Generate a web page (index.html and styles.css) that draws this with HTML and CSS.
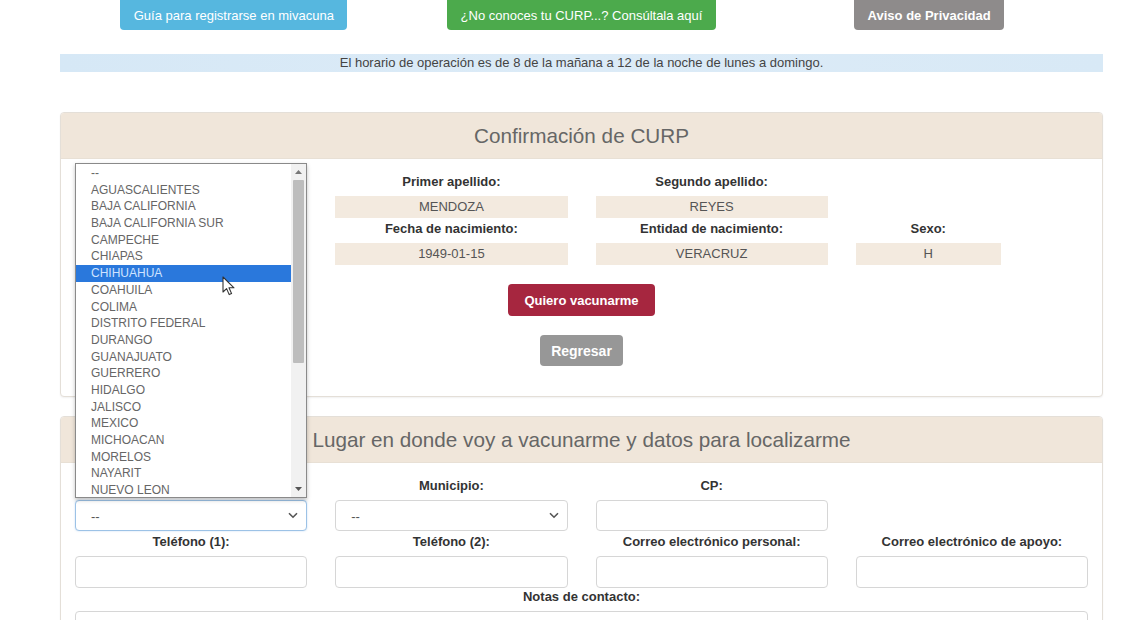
FILE: index.html
```html
<!DOCTYPE html>
<html lang="es">
<head>
<meta charset="utf-8">
<title>Mi vacuna</title>
<link rel="stylesheet" href="styles.css">
</head>
<body>
<div class="page">
  <div class="top-buttons">
    <div class="tb-cell"><a class="btn btn-info">Guía para registrarse en mivacuna</a></div>
    <div class="tb-cell"><a class="btn btn-success">¿No conoces tu CURP...? Consúltala aquí</a></div>
    <div class="tb-cell"><a class="btn btn-gray">Aviso de Privacidad</a></div>
  </div>

  <div class="info">El horario de operación es de 8 de la mañana a 12 de la noche de lunes a domingo.</div>

  <section class="card card-curp">
    <header class="card-head">Confirmación de CURP</header>
    <div class="card-body">
      <div class="grid4">
        <div class="field"></div>
        <div class="field"><div class="label">Primer apellido:</div><div class="value">MENDOZA</div></div>
        <div class="field"><div class="label">Segundo apellido:</div><div class="value">REYES</div></div>
        <div class="field"></div>
        <div class="field"></div>
        <div class="field"><div class="label">Fecha de nacimiento:</div><div class="value">1949-01-15</div></div>
        <div class="field"><div class="label">Entidad de nacimiento:</div><div class="value">VERACRUZ</div></div>
        <div class="field field-short"><div class="label">Sexo:</div><div class="value">H</div></div>
      </div>
      <div class="actions">
        <a class="btn btn-red">Quiero vacunarme</a>
        <a class="btn btn-back">Regresar</a>
      </div>
    </div>
  </section>

  <section class="card card-place">
    <header class="card-head">Lugar en donde voy a vacunarme y datos para localizarme</header>
    <div class="card-body body-place">
      <div class="grid4">
        <div class="field">
          <div class="label"></div>
          <div class="select-wrap">
            <div class="select focused"><span>--</span>
              <svg class="chev" width="10" height="7" viewBox="0 0 10 7"><path d="M1 1.2 L5 5.2 L9 1.2" fill="none" stroke="#555" stroke-width="1.6"/></svg>
            </div>
            <div class="listbox">
              <ul class="options">
                <li>--</li>
                <li>AGUASCALIENTES</li>
                <li>BAJA CALIFORNIA</li>
                <li>BAJA CALIFORNIA SUR</li>
                <li>CAMPECHE</li>
                <li>CHIAPAS</li>
                <li class="hl">CHIHUAHUA</li>
                <li>COAHUILA</li>
                <li>COLIMA</li>
                <li>DISTRITO FEDERAL</li>
                <li>DURANGO</li>
                <li>GUANAJUATO</li>
                <li>GUERRERO</li>
                <li>HIDALGO</li>
                <li>JALISCO</li>
                <li>MEXICO</li>
                <li>MICHOACAN</li>
                <li>MORELOS</li>
                <li>NAYARIT</li>
                <li>NUEVO LEON</li>
              </ul>
              <div class="sbar">
                <svg class="arr arr-up" width="7" height="4" viewBox="0 0 7 4"><path d="M0 4 L3.5 0 L7 4Z" fill="#777"/></svg>
                <div class="thumb"></div>
                <svg class="arr arr-down" width="7" height="4" viewBox="0 0 7 4"><path d="M0 0 L3.5 4 L7 0Z" fill="#555"/></svg>
              </div>
              <svg class="cursor" width="13" height="20" viewBox="0 0 13 20"><path d="M1 1 L1 16 L4.6 12.6 L7.2 18.6 L9.6 17.6 L7 11.8 L12 11.8 Z" fill="#fff" stroke="#333" stroke-width="1.1" stroke-linejoin="round"/></svg>
            </div>
          </div>
        </div>
        <div class="field">
          <div class="label">Municipio:</div>
          <div class="select"><span>--</span>
            <svg class="chev" width="10" height="7" viewBox="0 0 10 7"><path d="M1 1.2 L5 5.2 L9 1.2" fill="none" stroke="#555" stroke-width="1.6"/></svg>
          </div>
        </div>
        <div class="field"><div class="label">CP:</div><div class="input"></div></div>
        <div class="field"></div>
        <div class="field"><div class="label">Teléfono (1):</div><div class="input tall"></div></div>
        <div class="field"><div class="label">Teléfono (2):</div><div class="input tall"></div></div>
        <div class="field"><div class="label">Correo electrónico personal:</div><div class="input tall"></div></div>
        <div class="field"><div class="label">Correo electrónico de apoyo:</div><div class="input tall"></div></div>
      </div>
      <div class="notes">
        <div class="label label-notes">Notas de contacto:</div>
        <div class="textarea"></div>
      </div>
    </div>
  </section>
</div>
</body>
</html>
```

FILE: styles.css
```css
* { box-sizing: border-box; }
html, body { margin: 0; padding: 0; background: #fff; }
body {
  font-family: "Liberation Sans", Arial, sans-serif;
  color: #333;
  overflow: hidden;
}
.page { width: 1043px; margin-left: 60px; }

.top-buttons {
  display: grid;
  grid-template-columns: repeat(3, 1fr);
  margin-top: -6px;
}
.tb-cell { display: flex; justify-content: center; }
.btn {
  display: inline-flex;
  align-items: center;
  justify-content: center;
  color: #fff;
  border-radius: 4px;
  font-size: 13px;
  white-space: nowrap;
}
.top-buttons .btn { height: 36px; padding-top: 6px; }
.btn-info { background: #56b7df; width: 227px; }
.btn-success { background: #4caa4c; width: 269px; }
.btn-gray { background: #8e8b8b; width: 150px; font-weight: bold; }

.info {
  margin-top: 24px;
  height: 18px;
  line-height: 18px;
  background: linear-gradient(90deg, #d6e8f6, #dcebf7 50%, #d8e9f6);
  text-align: center;
  font-size: 13px;
  color: #444;
}

.card {
  border: 1px solid #e4dfd8;
  border-radius: 4px;
  box-shadow: 0 1px 2px rgba(0,0,0,0.06);
  background: #fff;
}
.card-curp { margin-top: 40px; }
.card-place { margin-top: 19px; }
.card-head {
  height: 46px;
  background: #f0e6da;
  border-bottom: 1px solid #e8e0d5;
  display: flex;
  align-items: center;
  justify-content: center;
  font-size: 20.7px;
  color: #666;
  border-radius: 3px 3px 0 0;
}
.card-body { padding: 12px 14px 30px; }
.body-place { padding-top: 12px; padding-bottom: 0; }

.grid4 {
  display: grid;
  grid-template-columns: repeat(4, 1fr);
  column-gap: 28px;
}
.field { display: flex; flex-direction: column; align-items: stretch; }
.field-short { width: 145px; }
.label {
  margin-top: 3px;
  margin-bottom: 6px;
  height: 16px;
  line-height: 16px;
  font-size: 13px;
  font-weight: bold;
  color: #333;
  text-align: center;
  white-space: nowrap;
}
.value {
  height: 22px;
  line-height: 22px;
  background: #f3eadf;
  text-align: center;
  font-size: 13px;
  color: #555;
}

.actions {
  display: flex;
  flex-direction: column;
  align-items: center;
  gap: 19px;
  margin-top: 19px;
}
.btn-red {
  background: #a6263f;
  width: 147px;
  height: 32px;
  font-weight: bold;
  font-size: 13px;
}
.btn-back {
  background: #979797;
  width: 83px;
  height: 31px;
  font-weight: bold;
  font-size: 14px;
}

.select-wrap { position: relative; }
.select, .input, .textarea {
  border: 1px solid #d6d6d6;
  border-radius: 4px;
  background: #fff;
}
.select {
  height: 31px;
  display: flex;
  align-items: center;
  justify-content: space-between;
  padding: 0 8px 0 15px;
  font-size: 13px;
  color: #555;
}
.select span { padding-top: 2px; }
.select.focused {
  border-color: #9cc2e6;
  box-shadow: 0 0 2px rgba(80,150,220,0.35);
}
.input { height: 31px; }
.input.tall { height: 32px; }

.notes { display: flex; flex-direction: column; }
.label-notes { margin-top: 1px; }
.textarea { height: 40px; }

.listbox {
  position: absolute;
  left: 0;
  bottom: calc(100% + 2px);
  width: 232px;
  height: 335px;
  background: #fff;
  border: 1px solid #8a8a8a;
  box-shadow: 0 2px 4px rgba(0,0,0,0.25);
  z-index: 10;
}
.options {
  list-style: none;
  margin: 0;
  padding: 1px 0 0;
  width: 215px;
}
.options li {
  height: 16.7px;
  line-height: 16.7px;
  padding-left: 15px;
  font-size: 12px;
  color: #666;
  white-space: nowrap;
}
.options li.hl { background: #2a78dc; color: #cfe3ff; }
.sbar {
  position: absolute;
  top: 0;
  right: 0;
  width: 15px;
  height: 100%;
  background: #f1f1f1;
}
.arr { position: absolute; left: 4px; }
.arr-up { top: 6px; }
.arr-down { bottom: 6px; }
.thumb {
  position: absolute;
  top: 16px;
  left: 2px;
  width: 11px;
  height: 183px;
  background: #bdbdbd;
  border-radius: 1px;
}
.cursor {
  position: absolute;
  left: 146px;
  top: 112px;
}
```
